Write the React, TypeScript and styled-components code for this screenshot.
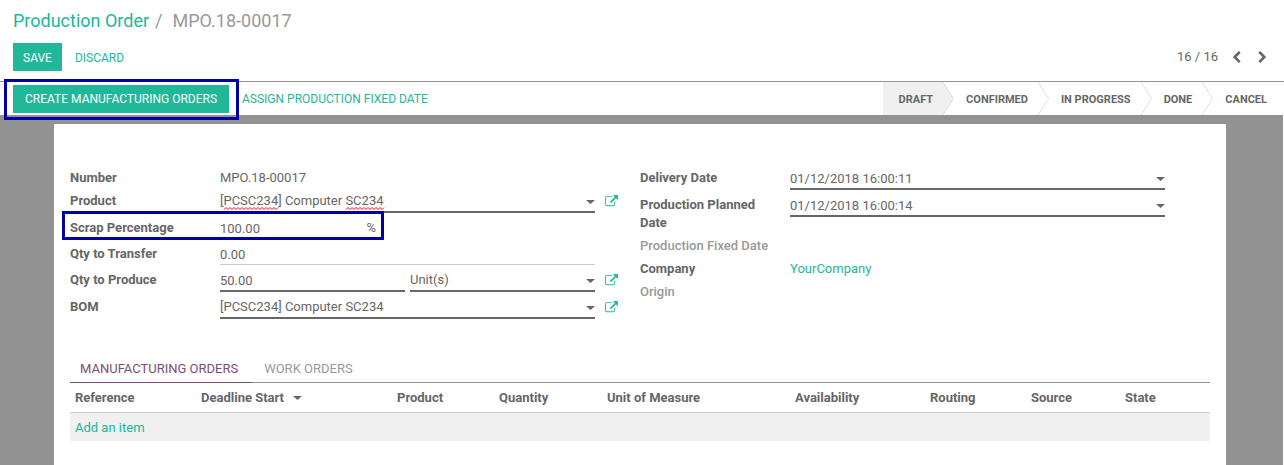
import React from "react";
import styled, { createGlobalStyle, css } from "styled-components";

const color = {
  green: "#21b799",
  text: "#666666",
  muted: "#999999",
  line: "#929292",
  lightLine: "#cccccc",
  shade: "#f0f0f0",
  backdrop: "#929292",
  purple: "#7c4d76",
  marker: "#0000a0",
};

const GlobalStyle = createGlobalStyle`
  *, *::before, *::after { box-sizing: border-box; }
  html, body, #root { height: 100%; }
  body {
    margin: 0;
    background: #fff;
    color: ${color.text};
    font-family: Roboto, "Liberation Sans", sans-serif;
    font-size: 13px;
    line-height: 18px;
  }
  button, input, select {
    font: inherit;
    color: inherit;
    margin: 0;
    padding: 0;
    border: 0;
    border-radius: 0;
    background: none;
    outline: none;
  }
  button { cursor: pointer; white-space: nowrap; }
  a { color: ${color.green}; text-decoration: none; }
`;

const Page = styled.div`
  display: flex;
  flex-direction: column;
  min-height: 100%;
`;

const ControlPanel = styled.header`
  padding: 8px 14px 10px 13px;
  border-bottom: 1px solid ${color.line};
`;

const Breadcrumb = styled.nav`
  display: flex;
  gap: 6px;
  font-size: 18px;
  line-height: 25px;
  color: ${color.muted};
`;

const Crumb = styled.span`
  margin-left: 4px;
`;

const PanelRow = styled.div`
  display: flex;
  align-items: center;
  justify-content: space-between;
  margin-top: 10px;
`;

const Actions = styled.div`
  display: flex;
  align-items: center;
  gap: 13px;
`;

const PrimaryButton = styled.button<{ $wide?: boolean }>`
  height: 28px;
  padding: 1px ${(p) => (p.$wide ? 12 : 10)}px 0;
  background: ${color.green};
  color: #fff;
  font-size: 12px;
`;

const LinkButton = styled.button`
  height: 28px;
  padding-top: 1px;
  color: ${color.green};
  font-size: 12px;
`;

const Pager = styled.div`
  display: flex;
  align-items: center;
  gap: 11px;
`;

const PagerButton = styled.button`
  display: flex;
  width: 15px;
  justify-content: center;
`;

const StatusBar = styled.div`
  display: flex;
  align-items: center;
  justify-content: space-between;
  height: 33px;
  padding: 0 7px 0 13px;
`;

const Highlighted = styled.div`
  position: relative;
  display: flex;
`;

const Marker = styled.span<{ $inset: string; $width?: number }>`
  position: absolute;
  inset: ${(p) => p.$inset};
  ${(p) => p.$width && css`width: ${p.$width}px;`}
  border: 3px solid ${color.marker};
  pointer-events: none;
  z-index: 1;
`;

const Stages = styled.ol`
  display: flex;
  height: 33px;
  margin: 0;
  padding: 0;
  list-style: none;
`;

const Stage = styled.li<{ $active?: boolean }>`
  display: flex;
  align-items: center;
  padding-left: ${(p) => (p.$active ? 16 : 12)}px;
  font-size: 11px;
  font-weight: 700;
  background: ${(p) => (p.$active ? color.shade : "transparent")};
`;

const StageName = styled.span`
  padding: 2px 10px 0 0;
`;

const StageArrow = styled.svg`
  display: block;
  width: 11px;
  height: 33px;
  background: #fff;
`;

const Backdrop = styled.main`
  display: flex;
  flex: 1;
  margin-right: 1px;
  padding: 9px 57px 0 54px;
  background: ${color.backdrop};
`;

const Sheet = styled.div`
  flex: 1;
  min-width: 0;
  padding: 43px 16px 24px;
  background: #fff;
`;

const Groups = styled.div`
  display: grid;
  grid-template-columns: 1fr 1fr;
`;

const Group = styled.div`
  display: flex;
  flex-direction: column;
  gap: 3px;
`;

const Row = styled.div`
  position: relative;
  display: grid;
  grid-template-columns: 150px 1fr 45px;
  align-items: start;
`;

const Label = styled.label<{ $muted?: boolean }>`
  padding: 2px 15px 0 0;
  font-weight: ${(p) => (p.$muted ? 500 : 700)};
  color: ${(p) => (p.$muted ? color.muted : color.text)};
`;

const Value = styled.output`
  padding-top: 2px;
`;

const ValueLink = styled.a`
  padding-top: 2px;
`;

const Split = styled.div`
  display: grid;
  grid-template-columns: 1fr 1fr;
  gap: 5px;
`;

const FieldBox = styled.div<{ $line: "none" | "thin" | "thick"; $short?: boolean }>`
  position: relative;
  display: flex;
  align-items: center;
  min-width: 0;
  height: ${(p) => (p.$line === "thick" ? 23 : 22)}px;
  margin-bottom: 1px;
  ${(p) => p.$short && css`width: 156px;`}
  ${(p) => p.$line === "thin" && css`border-bottom: 1px solid ${color.lightLine};`}
  ${(p) => p.$line === "thick" && css`border-bottom: 2px solid ${color.text};`}
`;

const controlStyle = css`
  flex: 1;
  width: 100%;
  min-width: 0;
  height: 21px;
  padding-top: 1px;
`;

const TextInput = styled.input`
  ${controlStyle}
`;

const Select = styled.select`
  ${controlStyle}
  appearance: none;
`;

const CaretSvg = styled.svg`
  flex: none;
  width: 9px;
  height: 4px;
  fill: ${color.text};
`;

const FieldCaret = styled(CaretSvg)`
  position: absolute;
  right: 0;
  top: 10px;
  pointer-events: none;
`;

const Squiggles = styled.svg`
  position: absolute;
  left: 0;
  bottom: 1px;
  width: 165px;
  height: 3px;
  pointer-events: none;
`;

const OpenButton = styled.button`
  display: flex;
  margin: 5px 0 0 10px;
  color: ${color.green};
`;

const Notebook = styled.section`
  margin-top: 37px;
`;

const Tabs = styled.div`
  display: flex;
  gap: 2px;
  border-bottom: 1px solid ${color.line};
`;

const Tab = styled.button<{ $active?: boolean }>`
  height: 26px;
  margin-bottom: -1px;
  padding: 0 14px 1px 10px;
  border-bottom: 1px solid ${(p) => (p.$active ? color.purple : "transparent")};
  color: ${(p) => (p.$active ? color.purple : color.muted)};
`;

const Table = styled.table`
  width: 100%;
  table-layout: fixed;
  border-collapse: separate;
  border-spacing: 0;
`;

const HeadCell = styled.th<{ $width: number }>`
  width: ${(p) => p.$width}px;
  height: 30px;
  padding: 1px 0 0 5px;
  border-bottom: 1px solid ${color.lightLine};
  font-weight: 700;
  text-align: left;
  white-space: nowrap;
`;

const SortCaret = styled(CaretSvg)`
  margin: 0 0 2px 9px;
`;

const AddCell = styled.td`
  height: 28px;
  padding: 1px 5px 0;
  background: ${color.shade};
`;

const Caret = ({ as: Shape }: { as: typeof CaretSvg }) => (
  <Shape viewBox="0 0 9 4" aria-hidden="true">
    <path d="M0 0h9L4.5 4z" />
  </Shape>
);

const Chevron = ({ d }: { d: string }) => (
  <svg width="13" height="13" viewBox="0 0 1792 1792" fill="currentColor" aria-hidden="true">
    <path d={d} />
  </svg>
);

const OpenRecord = ({ name }: { name: string }) => (
  <OpenButton type="button" aria-label={`Open ${name}`}>
    <svg width="13" height="13" viewBox="0 0 1792 1792" fill="currentColor" aria-hidden="true">
      <path d="M1408 928v320q0 119-84.5 203.5t-203.5 84.5h-832q-119 0-203.5-84.5t-84.5-203.5v-832q0-119 84.5-203.5t203.5-84.5h704q14 0 23 9t9 23v64q0 14-9 23t-23 9h-704q-66 0-113 47t-47 113v832q0 66 47 113t113 47h832q66 0 113-47t47-113v-320q0-14 9-23t23-9h64q14 0 23 9t9 23zm384-864v512q0 26-19 45t-45 19-45-19l-176-176-652 652q-10 10-23 10t-23-10l-114-114q-10-10-10-23t10-23l652-652-176-176q-19-19-19-45t19-45 45-19h512q26 0 45 19t19 45z" />
    </svg>
  </OpenButton>
);

const wave = (from: number, to: number) => {
  let d = `M${from} 2.5`;
  for (let x = from + 2, up = true; x <= to; x += 2, up = !up) d += `L${x} ${up ? 0.5 : 2.5}`;
  return d;
};

const SelectField = ({ id, value, label, children }: {
  id: string;
  value: string;
  label?: string;
  children?: React.ReactNode;
}) => (
  <FieldBox $line="thick">
    <Select id={id} defaultValue={value} aria-label={label}>
      <option>{value}</option>
    </Select>
    {children}
    <Caret as={FieldCaret} />
  </FieldBox>
);

const DateField = ({ id, value }: { id: string; value: string }) => (
  <FieldBox $line="thick">
    <TextInput id={id} defaultValue={value} />
    <Caret as={FieldCaret} />
  </FieldBox>
);

const stages = ["DRAFT", "CONFIRMED", "IN PROGRESS", "DONE", "CANCEL"];

const columns: [string, number][] = [
  ["Reference", 126],
  ["Deadline Start", 196],
  ["Product", 102],
  ["Quantity", 108],
  ["Unit of Measure", 188],
  ["Availability", 135],
  ["Routing", 101],
  ["Source", 94],
  ["State", 90],
];

export default function App() {
  return (
    <Page>
      <GlobalStyle />
      <ControlPanel>
        <Breadcrumb aria-label="Breadcrumb">
          <a href="#orders">Production Order</a>
          <span>/</span>
          <Crumb>MPO.18-00017</Crumb>
        </Breadcrumb>
        <PanelRow>
          <Actions>
            <PrimaryButton type="button">SAVE</PrimaryButton>
            <LinkButton type="button">DISCARD</LinkButton>
          </Actions>
          <Pager>
            <span>16 / 16</span>
            <PagerButton type="button" aria-label="Previous">
              <Chevron d="M1427 301l-531 531 531 531q19 19 19 45t-19 45l-166 166q-19 19-45 19t-45-19l-742-742q-19-19-19-45t19-45l742-742q19-19 45-19t45 19l166 166q19 19 19 45t-19 45z" />
            </PagerButton>
            <PagerButton type="button" aria-label="Next">
              <Chevron d="M1363 877l-742 742q-19 19-45 19t-45-19l-166-166q-19-19-19-45t19-45l531-531-531-531q-19-19-19-45t19-45l166-166q19-19 45-19t45 19l742 742q19 19 19 45t-19 45z" />
            </PagerButton>
          </Pager>
        </PanelRow>
      </ControlPanel>

      <StatusBar>
        <Actions>
          <Highlighted>
            <PrimaryButton type="button" $wide>CREATE MANUFACTURING ORDERS</PrimaryButton>
            <Marker $inset="-6px -10px -7px -9px" />
          </Highlighted>
          <LinkButton type="button">ASSIGN PRODUCTION FIXED DATE</LinkButton>
        </Actions>
        <Stages>
          {stages.map((name, i) => (
            <Stage key={name} $active={i === 0}>
              <StageName>{name}</StageName>
              {i < stages.length - 1 && (
                <StageArrow viewBox="0 0 11 33" aria-hidden="true">
                  <path
                    d="M0 0L10.5 16.5L0 33"
                    fill={i === 0 ? color.shade : "none"}
                    stroke="#dddddd"
                  />
                </StageArrow>
              )}
            </Stage>
          ))}
        </Stages>
      </StatusBar>

      <Backdrop>
        <Sheet>
          <Groups>
            <Group>
              <Row>
                <Label htmlFor="number">Number</Label>
                <Value id="number">MPO.18-00017</Value>
              </Row>
              <Row>
                <Label htmlFor="product">Product</Label>
                <SelectField id="product" value="[PCSC234] Computer SC234">
                  <Squiggles viewBox="0 0 165 3" fill="none" stroke="#ff0000" aria-hidden="true">
                    <path d={wave(4, 58)} />
                    <path d={wave(126, 164)} />
                  </Squiggles>
                </SelectField>
                <OpenRecord name="product" />
              </Row>
              <Row>
                <Label htmlFor="scrap">Scrap Percentage</Label>
                <FieldBox $line="none" $short>
                  <TextInput id="scrap" defaultValue="100.00" />
                  <span>%</span>
                </FieldBox>
                <Marker $inset="-6px auto 0 -8px" $width={322} />
              </Row>
              <Row>
                <Label htmlFor="transfer">Qty to Transfer</Label>
                <FieldBox $line="thin">
                  <TextInput id="transfer" defaultValue="0.00" />
                </FieldBox>
              </Row>
              <Row>
                <Label htmlFor="produce">Qty to Produce</Label>
                <Split>
                  <FieldBox $line="thick">
                    <TextInput id="produce" defaultValue="50.00" />
                  </FieldBox>
                  <SelectField id="unit" label="Unit of measure" value="Unit(s)" />
                </Split>
                <OpenRecord name="unit" />
              </Row>
              <Row>
                <Label htmlFor="bom">BOM</Label>
                <SelectField id="bom" value="[PCSC234] Computer SC234" />
                <OpenRecord name="BOM" />
              </Row>
            </Group>
            <Group>
              <Row>
                <Label htmlFor="delivery">Delivery Date</Label>
                <DateField id="delivery" value="01/12/2018 16:00:11" />
              </Row>
              <Row>
                <Label htmlFor="planned">Production Planned Date</Label>
                <DateField id="planned" value="01/12/2018 16:00:14" />
              </Row>
              <Row>
                <Label as="span" $muted>Production Fixed Date</Label>
              </Row>
              <Row>
                <Label as="span">Company</Label>
                <ValueLink href="#company">YourCompany</ValueLink>
              </Row>
              <Row>
                <Label as="span" $muted>Origin</Label>
              </Row>
            </Group>
          </Groups>

          <Notebook>
            <Tabs role="tablist">
              <Tab type="button" role="tab" aria-selected="true" $active>MANUFACTURING ORDERS</Tab>
              <Tab type="button" role="tab" aria-selected="false">WORK ORDERS</Tab>
            </Tabs>
            <Table>
              <thead>
                <tr>
                  {columns.map(([name, width]) => (
                    <HeadCell key={name} $width={width} scope="col">
                      {name}
                      {name === "Deadline Start" && <Caret as={SortCaret} />}
                    </HeadCell>
                  ))}
                </tr>
              </thead>
              <tbody>
                <tr>
                  <AddCell colSpan={columns.length}>
                    <a href="#add">Add an item</a>
                  </AddCell>
                </tr>
              </tbody>
            </Table>
          </Notebook>
        </Sheet>
      </Backdrop>
    </Page>
  );
}
